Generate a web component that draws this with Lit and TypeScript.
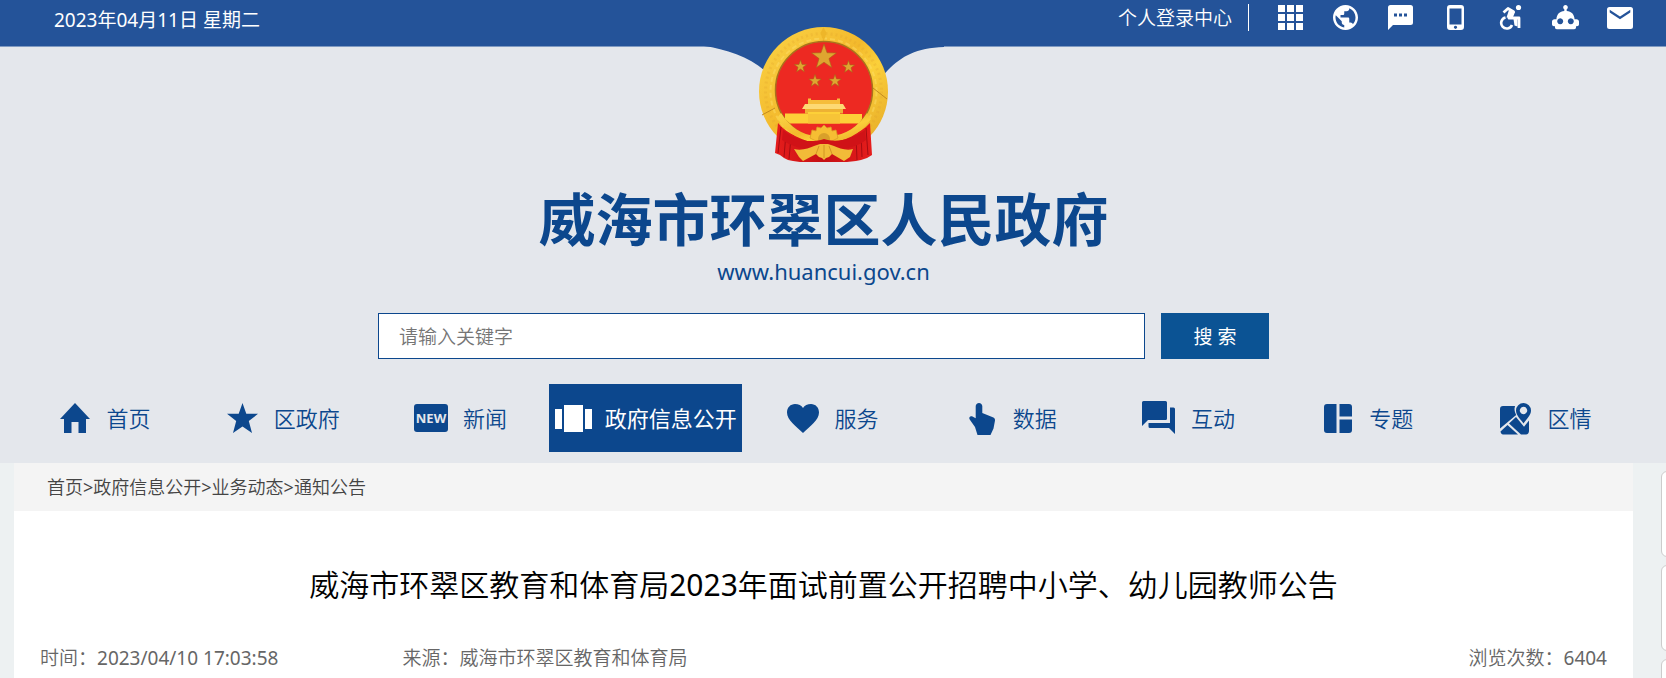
import { LitElement, html, svg, css } from "lit";
import { customElement } from "lit/decorators.js";
import { classMap } from "lit/directives/class-map.js";

const starPoints = (cx: number, cy: number, r: number, inner = 0.4) =>
  Array.from({ length: 10 }, (_, i) => {
    const a = -Math.PI / 2 + (i * Math.PI) / 5;
    const d = i % 2 ? r * inner : r;
    return `${(cx + d * Math.cos(a)).toFixed(2)},${(cy + d * Math.sin(a)).toFixed(2)}`;
  }).join(" ");

const tools = [
  {
    label: "网站群",
    art: svg`<path d="M1 1h7v7h-7zM10 1h7v7h-7zM19 1h7v7h-7zM1 10h7v7h-7zM10 10h7v7h-7zM19 10h7v7h-7zM1 19h7v7h-7zM10 19h7v7h-7zM19 19h7v7h-7z"/>`,
  },
  {
    label: "语言",
    art: svg`<path transform="translate(-1.5 -1.5) scale(1.25)" d="M12 2C6.48 2 2 6.48 2 12s4.48 10 10 10 10-4.48 10-10S17.52 2 12 2zm-1 17.93c-3.95-.49-7-3.85-7-7.93 0-.62.08-1.21.21-1.79L9 15v1c0 1.1.9 2 2 2v1.93zm6.9-2.54c-.26-.81-1-1.39-1.9-1.39h-1v-3c0-.55-.45-1-1-1H8v-2h2c.55 0 1-.45 1-1V7h2c1.1 0 2-.9 2-2v-.41c2.93 1.19 5 4.06 5 7.41 0 2.08-.8 3.97-2.1 5.39z"/>`,
  },
  {
    label: "短信",
    art: svg`<path fill-rule="evenodd" d="M3.5 1h20A2.5 2.5 0 0 1 26 3.500v15a2.500 2.500 0 0 1-2.500 2.500H6L1 26V3.500A2.500 2.500 0 0 1 3.500 1zM7 9.500v3h3v-3zM12 9.500v3h3v-3zM17 9.500v3h3v-3z"/>`,
  },
  {
    label: "手机版",
    art: svg`<path fill-rule="evenodd" d="M8 1h11a3 3 0 0 1 3 3v19a3 3 0 0 1-3 3H8a3 3 0 0 1-3-3V4a3 3 0 0 1 3-3zM7.500 4.500v16h12v-16zM13.500 21.700a1.600 1.600 0 1 0 .01 0z"/>`,
  },
  {
    label: "无障碍",
    art: svg`<circle cx="21.500" cy="3.500" r="2.600"/>
      <path fill="none" stroke="currentColor" stroke-width="2.800" stroke-linejoin="round" d="M6.500 8.500l4.500-4 5.500 3.200-4.500 6.300h10V24"/>
      <path d="M12.500 4.500l5.500 3.500-2.500 6.500-6-1z"/>
      <path d="M16.500 15h4v7.500l-3-1z"/>
      <path fill="none" stroke="currentColor" stroke-width="2.600" d="M8.500 13.500a5.600 5.600 0 1 0 6.500 7.500"/>`,
  },
  {
    label: "智能机器人",
    art: svg`<path fill-rule="evenodd" d="M13.500 1a2.300 2.300 0 0 1 1.200 4.300V7c4.600.3 7.600 3.300 7.900 8.200h1.900c1.500 0 2.500 1 2.500 2.400v2.700c0 1.200-.9 2-2 2h-1v1.200c0 1-.8 1.700-1.800 1.700H4.800c-1 0-1.800-.7-1.800-1.700v-1.200H2c-1.100 0-2-.8-2-2v-2.700c0-1.400 1-2.400 2.500-2.400h1.900C4.700 10.300 7.700 7.300 12.300 7V5.300A2.300 2.300 0 0 1 13.500 1zM8.200 14.200a3 3 0 1 0 .01 0zM18.800 14.200a3 3 0 1 0 .01 0z"/>`,
  },
  {
    label: "邮箱",
    art: svg`<path fill-rule="evenodd" d="M2.500 3h21A2.500 2.500 0 0 1 26 5.500v17a2.500 2.500 0 0 1-2.500 2.500h-21A2.500 2.500 0 0 1 0 22.500v-17A2.500 2.500 0 0 1 2.500 3zM2.700 5.800v2.800L13 15.200l10.300-6.600V5.800L13 12.400z"/>`,
  },
];

const sections = [
  { text: "首页", art: svg`<path d="M18 3L33 19h-4v14h-7.500V22h-7v11H7V19H3z"/>` },
  {
    text: "区政府",
    art: svg`<path d="M18.500 3l3.800 10.800H34l-9.200 7.300L28 33l-9.500-6.500L9 33l3.200-11.900L3 13.800h11.700z"/>`,
  },
  {
    text: "新闻",
    art: svg`<rect x="1" y="4" width="34" height="28" rx="3"/><text class="new" x="18" y="23" text-anchor="middle">NEW</text>`,
  },
  {
    text: "政府信息公开",
    active: true,
    art: svg`<path d="M0 9h7v20H0zM9 5h19v27H9zM30 9h7v20h-7z"/>`,
  },
  {
    text: "服务",
    art: svg`<path d="M19 33C12 26 3 20 3 12.500C3 7.500 6.500 4 11 4c3.500 0 6.500 1.500 8 4 1.500-2.500 4.500-4 8-4 4.500 0 8 3.500 8 8.500C35 20 26 26 19 33z"/>`,
  },
  {
    text: "数据",
    art: svg`<path d="M16 3c1.800 0 3.300 1.400 3.300 3.300V13l10.500 4.300c1.600.7 2.400 1.600 2.200 3.200l-1.500 8L27.500 35H14.500L12 27l-5.300-7.500C5.500 17.500 7 15.800 9 16.300l3.700 2V6.300C12.700 4.400 14.200 3 16 3z"/>`,
  },
  {
    text: "互动",
    art: svg`<path d="M2.500 1h22A1.500 1.500 0 0 1 26 2.500v16a1.500 1.500 0 0 1-1.500 1.500H7l-6 6V2.500A1.500 1.500 0 0 1 2.500 1zM29 7.500h3.500A1.500 1.500 0 0 1 34 9v25l-6-6H9a1.500 1.500 0 0 1-1.500-1.500V23H29z"/>`,
  },
  {
    text: "专题",
    art: svg`<path d="M8 4h9.500v29H8a3 3 0 0 1-3-3V7a3 3 0 0 1 3-3zM20.500 4H30a3 3 0 0 1 3 3v9.500H20.500zM20.500 19.500H33V30a3 3 0 0 1-3 3h-9.500z"/>`,
  },
  {
    text: "区情",
    art: svg`<path d="M6 6h12c-1.200 4 0 6.500 1.200 9L3 28.500V9a3 3 0 0 1 3-3z"/>
      <path d="M3.500 31.500L10.500 25l10.500 9.500H6c-1.200 0-2.200-1.200-2.500-3z"/>
      <path d="M12 23.500l7-6.500 8 9.800 5-6.300V31c0 2-1.200 3.300-3 3.500h-5z"/>
      <path fill-rule="evenodd" d="M26.500 3a7.500 7.500 0 0 1 7.500 7.500c0 5-4.500 8.500-7.500 13-3-4.500-7.500-8-7.500-13A7.500 7.500 0 0 1 26.500 3zM26.500 6.800a3.700 3.700 0 1 0 .01 0z"/>`,
  },
];

const crumbs = ["首页", "政府信息公开", "业务动态", "通知公告"];

@customElement("national-emblem")
class NationalEmblem extends LitElement {
  static styles = css`
    :host { display: block; }
    .emblem { display: block; width: 129px; height: 137px; }
  `;

  render() {
    return html`<svg class="emblem" viewBox="0 0 129 137" role="img" aria-label="国徽">
      <defs>
        <linearGradient id="gold" x1="0" y1="0" x2="1" y2="1">
          <stop offset="0" stop-color="#fbd548" />
          <stop offset=".45" stop-color="#f3b92c" />
          <stop offset=".6" stop-color="#fbd03a" />
          <stop offset="1" stop-color="#e2a223" />
        </linearGradient>
        <linearGradient id="drape" x1="0" y1="0" x2="1" y2="0">
          <stop offset="0" stop-color="#e61d1c" />
          <stop offset=".5" stop-color="#c40f14" />
          <stop offset="1" stop-color="#e61d1c" />
        </linearGradient>
      </defs>
      <circle cx="64.500" cy="64.500" r="64.500" fill="url(#gold)" />
      <circle cx="64.500" cy="64.500" r="58" fill="none" stroke="#dfa02a" stroke-width="3" stroke-dasharray="2 3" opacity=".25" />
      <circle cx="64.500" cy="64.500" r="53" fill="none" stroke="#ffe372" stroke-width="2" stroke-dasharray="5 3" opacity=".4" />
      <path d="M64.500 0l-3 6 3 9 3-9z" fill="#eeb629" />
      <path d="M3 88l13-7M128 72l-14-11" stroke="#c28a20" stroke-width="1" />
      <circle cx="65" cy="63" r="48.500" fill="#ed2922" stroke="#a9741c" stroke-width="1.500" />
      <g fill="#dfa530" stroke="#a8641a" stroke-width=".6">
        <polygon points=${starPoints(65, 30, 13)} />
        <polygon points=${starPoints(41.500, 39.500, 6.500)} />
        <polygon points=${starPoints(89.500, 40, 6.500)} />
        <polygon points=${starPoints(56, 54, 6.500)} />
        <polygon points=${starPoints(76, 54, 6.500)} />
      </g>
      <path d="M49 71.500h3v1.500h26v-1.500h3V77H49z" fill="#f6bd3a" />
      <path d="M46 77h38l3 5H43z" fill="#fdd973" />
      <path d="M46 82h38v4.500H46z" fill="#eeb233" />
      <path d="M26 86.500h23V85h32v2h22v5l-3 4.500H31L26 92z" fill="#fdd038" />
      <path d="M49 87h32v9.500H49z" fill="#f7c437" />
      <path d="M19 96c10 12 24 17 45 17s37-6 47-17l2 32-5 3-6 2-5 1-9 1H41l-7-1-5-1-4-2-4-3-5-2z" fill="url(#drape)" />
      <path d="M22 100l-3 26M27 106l-2 24M32 110l-2 22M107 101l2 27M102 106l1 24M97 110l1 23" stroke="#a50c12" stroke-width="1" />
      <path d="M18 91C27 106 42 115 64 117c22-2 38-10 48-25l-4-6C99 100 86 108 72 109H57C43 108 31 100 22 86z" fill="url(#gold)" />
      <path d="M51 111l2-8 4 1 1-4 4 1 3-3 3 3 4-1 1 4 4-1 2 8-8 4H59z" fill="#f6be33" stroke="#d99d24" stroke-width=".8" />
      <circle cx="65" cy="112" r="6" fill="#d9a02a" />
      <path d="M24 103c14 12 29 13 41 9 12 4 27 1 41-9l1 10c-12 9-27 11-42 5-14 6-28 4-42-5z" fill="#d01217" />
      <path d="M35 122c8 2 15-1 20-3l6-2h8l6 2c5 2 12 5 19 3l-3 8-6 4-12-7-3 3-3 1-2 2-2-2-3-1-3-3-13 7-4-4z" fill="#f2bb38" />
      <path d="M65 118v13M60 119l-3 8M70 119l3 8" stroke="#c98a20" stroke-width=".8" />
    </svg>`;
  }
}

@customElement("app-root")
class AppRoot extends LitElement {
  static styles = css`
    :host {
      display: flex;
      flex-direction: column;
      position: relative;
      box-sizing: border-box;
      min-height: 100vh;
      overflow: hidden;
      background: #edf1f2;
      color: #0c478d;
      font-family: "Noto Sans", "Noto Sans CJK SC", sans-serif;
      font-size: 19px;
      font-weight: 350;
      line-height: 28px;
    }
    a { color: inherit; text-decoration: none; }
    h1, h2, p, ol, ul { margin: 0; padding: 0; list-style: none; font-weight: inherit; }
    svg { display: block; fill: currentColor; }
    .num { font-weight: 400; }

    .masthead { background: #e4e7ec; padding-bottom: 11px; }
    .topbar {
      display: flex;
      justify-content: space-between;
      align-items: flex-start;
      box-sizing: border-box;
      height: 47px;
      padding: 4px 32px 0 54px;
      background: #245399;
      border-bottom: 1px solid #7f9ac2;
      color: #fff;
    }
    .date { padding-top: 2px; font-weight: 400; }
    .quick { display: flex; gap: 28px; align-items: flex-start; }
    .login { padding-right: 16px; border-right: 1px solid #fff; height: 27px; }
    .tool { width: 27px; height: 26px; }

    .wrap { margin: 0 33px 0 14px; }
    .brand {
      position: relative;
      display: flex;
      flex-direction: column;
      align-items: center;
      margin-top: -20px;
    }
    .notch { position: absolute; top: 19px; width: 240px; height: 46px; fill: #245399; }
    .crest { position: relative; }
    .name { margin-top: 17px; font-size: 57px; line-height: 76px; font-weight: 700; }
    .site { font-size: 22px; line-height: 28px; font-weight: 400; }

    .search { display: flex; justify-content: center; gap: 16px; margin-top: 28px; height: 46px; }
    .field {
      box-sizing: border-box;
      width: 767px;
      padding: 2px 20px 0;
      border: 1px solid #0c478d;
      border-radius: 0;
      background: #fff;
      color: #333;
      font: inherit;
      outline: none;
    }
    .field::placeholder { color: #757575; opacity: 1; }
    .go {
      width: 108px;
      padding: 2px 0 0;
      border: 0;
      background: #0b5394;
      color: #fff;
      font: inherit;
      font-weight: 400;
    }

    .menu { display: flex; margin-top: 25px; font-size: 22px; line-height: 32px; }
    .entry { flex: 1 1 0; min-width: max-content; }
    .entry-link {
      display: flex;
      align-items: center;
      justify-content: center;
      gap: 13px;
      height: 68px;
      padding: 0 5px 0 6px;
    }
    .active { background: #0c478d; color: #fff; font-weight: 400; }
    .glyph { width: 37px; height: 36px; }
    .new { fill: #e4e7ec; font: 700 13px "Noto Sans", sans-serif; }

    .sheet { flex: 1; background: #fff; }
    .crumbs {
      display: flex;
      padding: 10px 33px;
      background: #f4f4f4;
      color: #444;
      font-size: 18px;
    }
    .crumb + .crumb::before { content: ">"; font-weight: 400; }
    .title { padding: 52px 24px 0; color: #000; font-size: 30px; line-height: 44px; text-align: center; }
    .meta { display: flex; padding: 37px 26px 6px; color: #666; }
    .source { margin-left: 124px; }
    .views { margin-left: auto; }

    .dock {
      position: absolute;
      top: 471px;
      left: calc(100% - 5px);
      display: grid;
      gap: 8px;
    }
    .dock-item {
      box-sizing: border-box;
      width: 80px;
      height: 86px;
      padding: 0;
      border: 1px solid #ccc;
      border-radius: 6px;
      background: #fff;
    }
  `;

  render() {
    return html`
      <header class="masthead">
        <div class="topbar">
          <p class="date">2023年04月11日 星期二</p>
          <div class="quick">
            <a class="login" href="#">个人登录中心</a>
            ${tools.map(
              (t) => html`<a href="#" aria-label=${t.label}><svg class="tool" viewBox="0 0 27 26">${t.art}</svg></a>`
            )}
          </div>
        </div>
        <div class="wrap">
          <div class="brand">
            <svg class="notch" viewBox="0 0 240 46">
              <path d="M0 0C22 3 48 12 62 26L80 46H164L184 24C198 10 212 2 240 1V0z" />
            </svg>
            <national-emblem class="crest"></national-emblem>
            <h1 class="name">威海市环翠区人民政府</h1>
            <a class="site" href="#">www.huancui.gov.cn</a>
          </div>
          <form class="search" role="search" @submit=${(e: Event) => e.preventDefault()}>
            <input class="field" type="text" aria-label="搜索关键字" placeholder="请输入关键字" />
            <button class="go" type="submit">搜 索</button>
          </form>
          <nav>
            <ul class="menu">
              ${sections.map(
                (s) => html`<li class="entry">
                  <a class=${classMap({ "entry-link": true, active: !!s.active })} href="#">
                    <svg class="glyph" viewBox="0 0 37 36" aria-hidden="true">${s.art}</svg>
                    <span>${s.text}</span>
                  </a>
                </li>`
              )}
            </ul>
          </nav>
        </div>
      </header>
      <main class="wrap sheet">
        <ol class="crumbs">
          ${crumbs.map((c) => html`<li class="crumb"><a href="#">${c}</a></li>`)}
        </ol>
        <h2 class="title">威海市环翠区教育和体育局<span class="num">2023</span>年面试前置公开招聘中小学、幼儿园教师公告</h2>
        <div class="meta">
          <p>时间：<span class="num">2023/04/10 17:03:58</span></p>
          <p class="source">来源：威海市环翠区教育和体育局</p>
          <p class="views">浏览次数：<span class="num">6404</span></p>
        </div>
      </main>
      <aside class="dock">
        ${["微信", "微博", "顶部"].map((n) => html`<button class="dock-item" type="button" aria-label=${n}></button>`)}
      </aside>
    `;
  }
}
